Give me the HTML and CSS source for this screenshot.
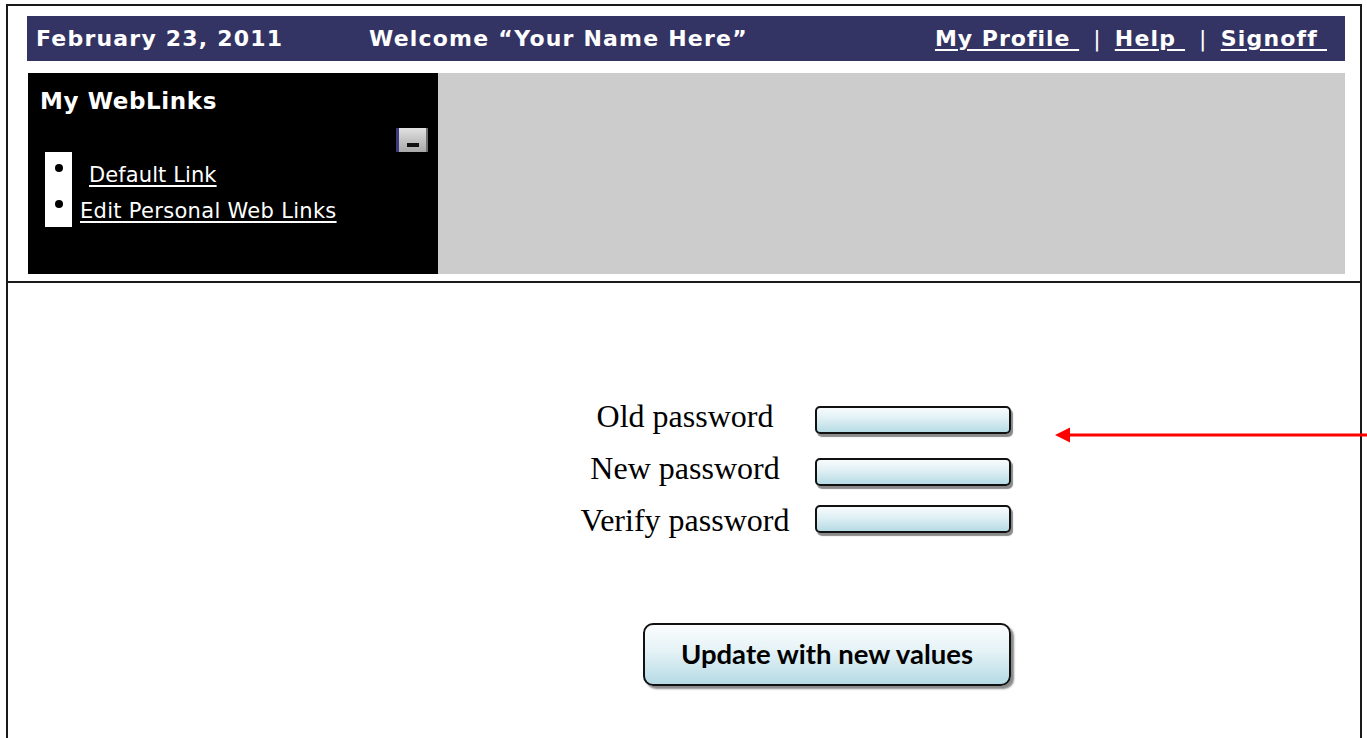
FILE: index.html
```html
<!DOCTYPE html>
<html lang="en">
<head>
<meta charset="utf-8">
<title>Change password</title>
<link rel="stylesheet" href="styles.css">
</head>
<body>
<div class="frame">
  <section class="top">
    <header class="bar">
      <span class="bar__date">February 23, 2011</span>
      <span class="bar__welcome">Welcome “Your Name Here”</span>
      <nav class="bar__nav">
        <a href="#" class="bar__link">My Profile&nbsp;</a>
        <span class="bar__sep">|</span>
        <a href="#" class="bar__link">Help&nbsp;</a>
        <span class="bar__sep">|</span>
        <a href="#" class="bar__link">Signoff&nbsp;</a>
      </nav>
    </header>
    <div class="panels">
      <aside class="weblinks">
        <h2 class="weblinks__title">My WebLinks</h2>
        <div class="weblinks__tools">
          <button class="minimize" type="button" aria-label="Minimize"></button>
        </div>
        <div class="weblinks__list">
          <div class="bullets">
            <span class="bullets__dot"></span>
            <span class="bullets__dot"></span>
          </div>
          <div class="weblinks__links">
            <a href="#" class="weblinks__link weblinks__link--first">Default Link</a>
            <a href="#" class="weblinks__link">Edit Personal Web Links</a>
          </div>
        </div>
      </aside>
      <div class="content-pane"></div>
    </div>
  </section>

  <section class="password">
    <form class="password__form">
      <label class="password__label" for="old">Old password</label>
      <input class="password__field" id="old" type="password">
      <label class="password__label" for="new">New password</label>
      <input class="password__field" id="new" type="password">
      <label class="password__label" for="verify">Verify password</label>
      <input class="password__field password__field--last" id="verify" type="password">
    </form>
    <button class="update" type="button">Update with new values</button>
    <svg class="pointer" width="320" height="16" viewBox="0 0 320 16" aria-hidden="true">
      <line x1="14" y1="8" x2="320" y2="8" stroke="#ff0000" stroke-width="3"/>
      <polygon points="0,8 15,0.5 15,15.5" fill="#ff0000"/>
    </svg>
  </section>
</div>
</body>
</html>
```

FILE: styles.css
```css
html, body {
  margin: 0;
  padding: 0;
  background: #ffffff;
  overflow: hidden;
}

.frame {
  margin: 4px 0 0 6px;
  width: 1356px;
  min-height: 734px;
  box-sizing: border-box;
  border: 2px solid #1a1a1a;
  border-bottom: none;
}

/* ---------- top area: header bar + panels ---------- */
.top {
  padding: 10px 15px 7px 19px;
  border-bottom: 2px solid #1a1a1a;
}

.bar {
  height: 45px;
  background: #343464;
  display: flex;
  align-items: center;
  color: #ffffff;
  font-family: "DejaVu Sans", Verdana, sans-serif;
  font-weight: bold;
  font-size: 22px;
  letter-spacing: 1.2px;
  padding-left: 9px;
  white-space: nowrap;
}

.bar__date {
  width: 333px;
}

.bar__nav {
  margin-left: auto;
  padding-right: 18px;
  display: flex;
  align-items: center;
}

.bar__link {
  color: #ffffff;
  text-decoration: underline;
  text-decoration-thickness: 2px;
  text-underline-offset: 3px;
}

.bar__link:first-child {
  letter-spacing: 1px;
}

.bar__sep {
  font-weight: normal;
  padding: 0 13px 0 14px;
}

.panels {
  display: flex;
  margin: 12px 0 0 1px;
  height: 201px;
}

.weblinks {
  width: 410px;
  background: #000000;
  color: #ffffff;
  font-family: "DejaVu Sans", Verdana, sans-serif;
}

.weblinks__title {
  margin: 0;
  padding: 15px 0 0 12px;
  font-size: 23px;
  letter-spacing: 0.6px;
  line-height: 26px;
  font-weight: bold;
}

.weblinks__tools {
  display: flex;
  justify-content: flex-end;
  padding-right: 10px;
  margin-top: 14px;
}

.minimize {
  position: relative;
  width: 32px;
  height: 24px;
  padding: 0;
  border: none;
  border-left: 3px solid #3b3b7c;
  border-right: 2px solid #6e6e6e;
  background: linear-gradient(#e2e2e2, #c4c4c4 50%, #a9a9a9);
  box-sizing: border-box;
}

.minimize::after {
  content: "";
  position: absolute;
  left: 8px;
  top: 15px;
  width: 12px;
  height: 4px;
  background: #111111;
}

.weblinks__list {
  display: flex;
}

.bullets {
  margin-left: 17px;
  width: 27px;
  height: 75px;
  background: #ffffff;
  display: flex;
  flex-direction: column;
  align-items: center;
  padding-top: 12px;
  gap: 28px;
  box-sizing: border-box;
}

.bullets__dot {
  width: 8px;
  height: 8px;
  border-radius: 50%;
  background: #000000;
}

.weblinks__links {
  display: flex;
  flex-direction: column;
  align-items: flex-start;
  padding-top: 5px;
  margin-left: 8px;
}

.weblinks__link {
  color: #ffffff;
  font-size: 21px;
  letter-spacing: 0.3px;
  line-height: 36px;
  text-decoration: underline;
  text-underline-offset: 3px;
}

.weblinks__link--first {
  margin-left: 9px;
  letter-spacing: 0.1px;
}

.content-pane {
  flex: 1;
  background: #cccccc;
}

/* ---------- password form ---------- */
.password {
  position: relative;
  padding: 113px 0 60px 567px;
}

.password__form {
  display: grid;
  grid-template-columns: 220px 198px;
  grid-auto-rows: 52px;
  column-gap: 20px;
  margin: 0;
}

.password__label {
  font-family: "Liberation Serif", "Times New Roman", serif;
  font-size: 32px;
  line-height: 40px;
  text-align: center;
  color: #000000;
  white-space: nowrap;
}

.password__field {
  align-self: start;
  margin: 10px 0 0 0;
  width: 196px;
  height: 28px;
  box-sizing: border-box;
  border: 2px solid #111111;
  border-radius: 5px;
  background: linear-gradient(#f7fbfd, #e2f1f5 40%, #b6dbe5);
  box-shadow: 2px 3px 1px #8a8a8a;
  padding: 0;
}

.password__field--last {
  margin-top: 5px;
}

.update {
  display: block;
  margin: 71px 0 0 68px;
  width: 368px;
  height: 63px;
  box-sizing: border-box;
  border: 2px solid #111111;
  border-radius: 10px;
  background: linear-gradient(#fbfdfe, #e4f2f6 45%, #b5dae4);
  box-shadow: 3px 3px 2px #8a8a8a;
  font-family: Lato, "Open Sans", sans-serif;
  font-weight: bold;
  font-size: 27.5px;
  padding: 0 0 3px 0;
  color: #000000;
  cursor: pointer;
}

.pointer {
  position: absolute;
  left: 1047px;
  top: 144px;
}
```
